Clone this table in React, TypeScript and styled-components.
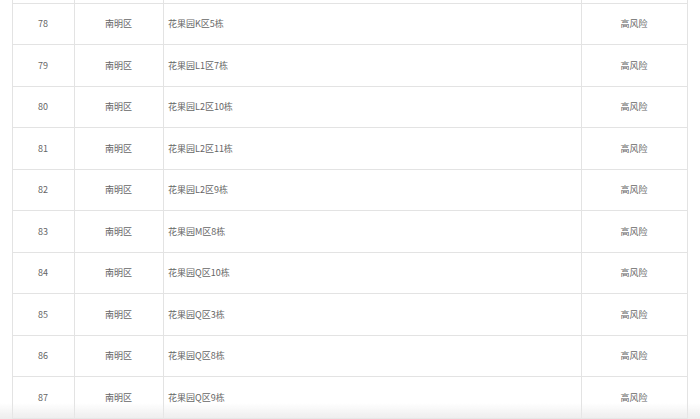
import React from "react";
import styled, { createGlobalStyle } from "styled-components";

interface IRow {
  id: number;
  district: string;
  address: string;
  level: string;
}

const rows: IRow[] = [
  { id: 78, district: "南明区", address: "花果园K区5栋", level: "高风险" },
  { id: 79, district: "南明区", address: "花果园L1区7栋", level: "高风险" },
  { id: 80, district: "南明区", address: "花果园L2区10栋", level: "高风险" },
  { id: 81, district: "南明区", address: "花果园L2区11栋", level: "高风险" },
  { id: 82, district: "南明区", address: "花果园L2区9栋", level: "高风险" },
  { id: 83, district: "南明区", address: "花果园M区8栋", level: "高风险" },
  { id: 84, district: "南明区", address: "花果园Q区10栋", level: "高风险" },
  { id: 85, district: "南明区", address: "花果园Q区3栋", level: "高风险" },
  { id: 86, district: "南明区", address: "花果园Q区8栋", level: "高风险" },
  { id: 87, district: "南明区", address: "花果园Q区9栋", level: "高风险" },
];

const App: React.FC = () => {
  return (
    <>
      <GlobalStyle />
      <Page>
        <Table>
          <colgroup>
            <col style={{ width: 62 }} />
            <col style={{ width: 89 }} />
            <col style={{ width: 418 }} />
            <col style={{ width: 106 }} />
          </colgroup>
          <tbody>
            {/* tail of the row above, scrolled out of view */}
            <TailRow>
              <Cell />
              <Cell />
              <Cell />
              <Cell />
            </TailRow>
            {rows.map((row) => (
              <Row key={row.id}>
                <Cell>{row.id}</Cell>
                <Cell>{row.district}</Cell>
                <Cell $left>{row.address}</Cell>
                <Cell>{row.level}</Cell>
              </Row>
            ))}
          </tbody>
        </Table>
      </Page>
      <BottomShade />
    </>
  );
};

const GlobalStyle = createGlobalStyle`
  html, body {
    margin: 0;
    padding: 0;
    background: #fff;
    overflow: hidden;
  }
  body {
    font-family: "Noto Sans CJK SC", "Liberation Sans", sans-serif;
  }
`;

const Page = styled.div`
  padding: 0 13px 0 12px;
  height: 419px;
  overflow: hidden;
`;

const Table = styled.table`
  width: 100%;
  border-collapse: collapse;
  table-layout: fixed;
`;

const TailRow = styled.tr`
  height: 3px;
  td {
    padding: 0;
    border-top: none;
  }
`;

const Row = styled.tr`
  height: 41.5px;
`;

const Cell = styled.td<{ $left?: boolean }>`
  border: 1px solid #e3e3e3;
  padding: 0 5px 0 4px;
  font-size: 9px;
  color: #666;
  text-align: ${(props) => (props.$left ? "left" : "center")};
  vertical-align: middle;
  white-space: nowrap;
`;

const BottomShade = styled.div`
  position: fixed;
  left: 0;
  right: 0;
  bottom: 0;
  height: 16px;
  background: linear-gradient(
    to bottom,
    rgba(240, 240, 240, 0),
    rgba(232, 232, 232, 0.8)
  );
  pointer-events: none;
`;

export default App;
